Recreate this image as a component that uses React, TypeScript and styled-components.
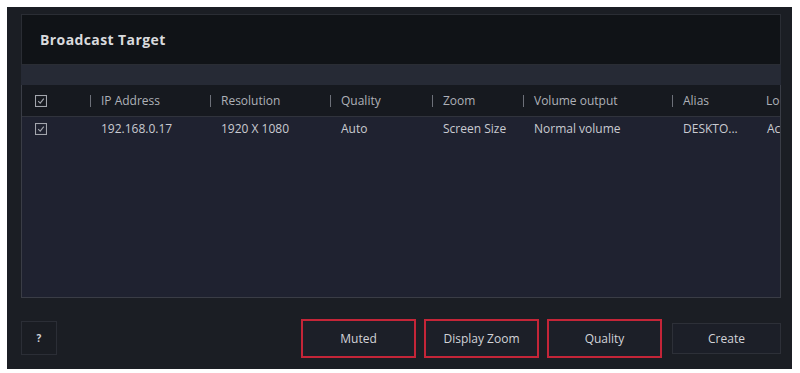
import styled, { createGlobalStyle } from "styled-components";

const GlobalStyle = createGlobalStyle`
    html, body {
        margin: 0;
        padding: 0;
        background: #ffffff;
    }
    * {
        box-sizing: border-box;
    }
`;

const columns = [
    { key: "ip", label: "IP Address" },
    { key: "res", label: "Resolution" },
    { key: "quality", label: "Quality" },
    { key: "zoom", label: "Zoom" },
    { key: "volume", label: "Volume output" },
    { key: "alias", label: "Alias" },
    { key: "lo", label: "Location" },
];

const rows = [
    { ip: "192.168.0.17", res: "1920 X 1080", quality: "Auto", zoom: "Screen Size", volume: "Normal volume", alias: "DESKTO...", lo: "Active" },
];

const Page = styled.div`
    width: 800px;
    height: 373px;
    padding: 7px 8px 4px 7px;
    font-family: "Open Sans", "Liberation Sans", sans-serif;
`;

const Panel = styled.main`
    display: flex;
    flex-direction: column;
    width: 785px;
    height: 362px;
    padding: 7px 11px 0 14px;
    background-color: #1b1e24;
`;

const Header = styled.header`
    display: flex;
    align-items: center;
    height: 51px;
    padding-left: 18px;
    background-color: #101317;
    border: 1px solid #2a2d34;
    h1 {
        margin: 0;
        font-size: 14px;
        font-weight: 700;
        letter-spacing: 0.4px;
        color: #d9dadd;
    }
`;

const Band = styled.div`
    height: 20px;
    background-color: #262a35;
`;

const Table = styled.section`
    flex: 1;
    overflow: hidden;
    background-color: #1f2230;
    border: 1px solid #3a3d46;
    border-top: none;
`;

const Row = styled.div<{ $head?: boolean }>`
    display: grid;
    grid-template-columns: 68px 120px 120px 102px 91px 149px 84px 1fr;
    align-items: center;
    height: ${(props) => (props.$head ? "32px" : "23px")};
    background-color: ${(props) => (props.$head ? "#16191f" : "transparent")};
    border-bottom: ${(props) => (props.$head ? "1px solid #30333c" : "none")};
    font-size: 12px;
    color: ${(props) => (props.$head ? "#aeb1b8" : "#c9cbd1")};
    white-space: nowrap;
`;

const Cell = styled.div<{ $sep?: boolean }>`
    display: flex;
    align-items: center;
    gap: 10px;
    overflow: hidden;
    padding-left: ${(props) => (props.$sep ? "0" : "11px")};
    &.check {
        padding-left: 13px;
    }
    > i {
        display: block;
        width: 1px;
        height: 12px;
        background-color: #6d7079;
    }
`;

const Footer = styled.footer`
    display: flex;
    align-items: center;
    height: 71px;
    padding-top: 9px;
    > .actions {
        display: flex;
        align-items: center;
        gap: 8px;
        margin-left: auto;
    }
`;

const HelpButton = styled.button`
    width: 36px;
    height: 34px;
    border: 1px solid #2b2e36;
    background-color: #1a1d23;
    color: #d0d2d8;
    font-family: inherit;
    font-size: 10px;
    font-weight: 700;
    padding: 0;
`;

const ActionButton = styled.button<{ $marked?: boolean }>`
    width: ${(props) => (props.$marked ? "115px" : "109px")};
    height: ${(props) => (props.$marked ? "39px" : "31px")};
    border: ${(props) => (props.$marked ? "2px solid #c42538" : "1px solid #2d3038")};
    background-color: #1c1f28;
    color: #d2d3d8;
    font-family: inherit;
    font-size: 12px;
    padding: 0;
`;

function CheckIcon() {
    return (
        <svg width="12" height="12" viewBox="0 0 12 12" fill="none" stroke="#a3a6ad" strokeWidth="1.1">
            <rect x="0.5" y="0.5" width="11" height="11" />
            <path d="M3.2 6.2 L5.2 8.2 L8.8 3.6" />
        </svg>
    );
}

export default function App() {
    return (
        <>
            <GlobalStyle />
            <Page>
                <Panel>
                    <Header>
                        <h1>Broadcast Target</h1>
                    </Header>
                    <Band />
                    <Table>
                        <Row $head>
                            <Cell className="check"><CheckIcon /></Cell>
                            {columns.map((col) => (
                                <Cell key={col.key} $sep>
                                    <i />
                                    <span>{col.label}</span>
                                </Cell>
                            ))}
                        </Row>
                        {rows.map((row) => (
                            <Row key={row.ip}>
                                <Cell className="check"><CheckIcon /></Cell>
                                {columns.map((col) => (
                                    <Cell key={col.key}>{row[col.key as keyof typeof row]}</Cell>
                                ))}
                            </Row>
                        ))}
                    </Table>
                    <Footer>
                        <HelpButton type="button">?</HelpButton>
                        <div className="actions">
                            <ActionButton type="button" $marked>Muted</ActionButton>
                            <ActionButton type="button" $marked>Display Zoom</ActionButton>
                            <ActionButton type="button" $marked>Quality</ActionButton>
                            <ActionButton type="button" style={{ marginLeft: 2 }}>Create</ActionButton>
                        </div>
                    </Footer>
                </Panel>
            </Page>
        </>
    );
}
